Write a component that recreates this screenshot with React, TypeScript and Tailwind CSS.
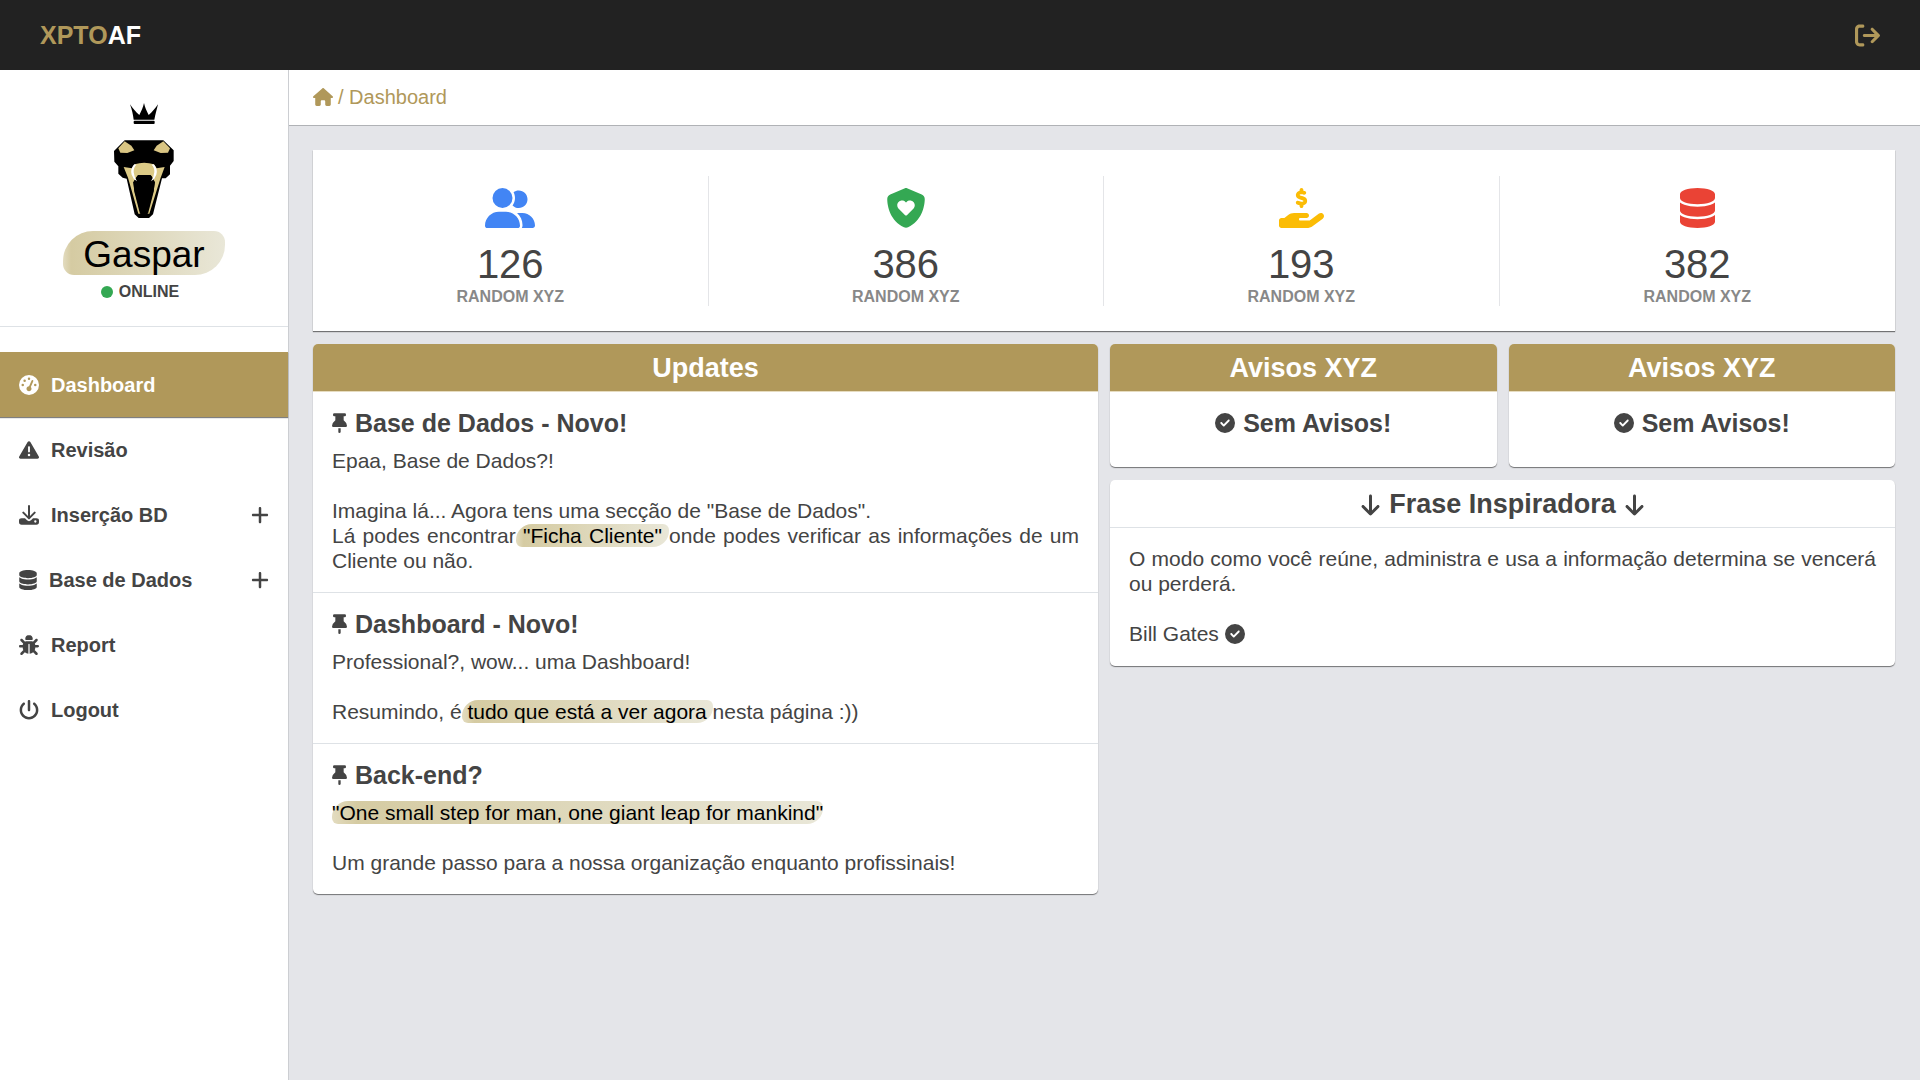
import type { ReactNode } from "react";
import type { IconType } from "react-icons";
import {
  FaArrowDown,
  FaArrowRightFromBracket,
  FaBug,
  FaCircleCheck,
  FaDatabase,
  FaGaugeHigh,
  FaHandHoldingDollar,
  FaHouse,
  FaPlus,
  FaPowerOff,
  FaShieldHeart,
  FaTriangleExclamation,
  FaUserGroup,
} from "react-icons/fa6";

function Crown() {
  return (
    <svg viewBox="0 0 84 63" className="h-[21px] w-7" aria-hidden="true">
      <path
        d="M0 4C8 16 18 28 28 36C34 24 39 14 42 0C45 14 50 24 56 36C66 28 76 16 84 4C80 20 76 34 73 50H11C9 34 6 20 0 4Z"
        fill="#000"
      />
      <rect x="11" y="53" width="63" height="10" rx="3" fill="#000" />
    </svg>
  );
}

function Snake() {
  return (
    <svg viewBox="190 149 180 234" className="h-[78px] w-[60px]" role="img" aria-label="XPTOAF">
      <path
        d="M190 182L222 150H338L369 180V212L358 226V252L345 264H334L307 372L295 383H264L252 372L228 265L216 262L203 250V228L191 214Z"
        fill="#000"
      />
      <path d="M222 153L203 174L209 187L230 188L251 180L242 166Z" fill="#d9c583" />
      <path d="M338 153L358 174L352 187L330 188L309 180L318 166Z" fill="#d9c583" />
      <path
        d="M219 230L244 234L252 222Q280 212 310 222L318 234L342 230L330 262L296 370H289L309 300L313 276L302 256H260L248 276L251 300L270 370H263L232 262Z"
        fill="#dcca86"
      />
      <path d="M262 254H300L312 276L309 304L292 370H268L251 304L248 276Z" fill="#000" />
      <path d="M251 222Q238 234 243 253Q247 266 259 273Q250 258 249 246Q248 232 257 223Z" fill="#fff" />
      <path d="M309 222Q322 234 317 253Q313 266 301 273Q310 258 311 246Q312 232 303 223Z" fill="#fff" />
    </svg>
  );
}

function InsertIcon({ className }: { className?: string }) {
  return (
    <svg viewBox="0 0 60 60" className={className} aria-hidden="true">
      <path
        d="M30 3V38M13 23L30 40L47 23"
        fill="none"
        stroke="currentColor"
        strokeWidth="6"
        strokeLinecap="round"
        strokeLinejoin="round"
      />
      <path
        fillRule="evenodd"
        fill="currentColor"
        d="M8 40H18L24 46Q30 51 36 46L42 40H52Q60 40 60 47V51Q60 59 52 59H8Q0 59 0 51V47Q0 40 8 40ZM49 46A3.500 3.500 0 1 0 49 53A3.500 3.500 0 1 0 49 46Z"
      />
    </svg>
  );
}

function PinIcon() {
  return (
    <svg viewBox="0 0 45 60" className="h-5 w-[15px]" fill="currentColor" aria-hidden="true">
      <path d="M7 1H38Q42 1 42 5V6Q42 10 38 10H35V22Q43 28 45 38Q45 42 41 42H4Q0 42 0 38Q2 28 10 22V10H7Q3 10 3 6V5Q3 1 7 1Z" />
      <path d="M19 46H26V56Q26 60 22 60Q19 60 19 56Z" />
    </svg>
  );
}

function Mark({ children }: { children: ReactNode }) {
  return (
    <mark className="rounded-tl-2xl rounded-tr-md rounded-br-2xl rounded-bl-md bg-transparent bg-linear-to-r from-[#e3dcc0] via-[#d5cba2] via-5% to-[#e9e7d8] text-black">
      {children}
    </mark>
  );
}

type NavItem = {
  label: string;
  icon: IconType | typeof InsertIcon;
  active?: boolean;
  expandable?: boolean;
  narrow?: boolean;
};

const nav: NavItem[] = [
  { label: "Dashboard", icon: FaGaugeHigh, active: true },
  { label: "Revisão", icon: FaTriangleExclamation },
  { label: "Inserção BD", icon: InsertIcon, expandable: true },
  { label: "Base de Dados", icon: FaDatabase, expandable: true, narrow: true },
  { label: "Report", icon: FaBug },
  { label: "Logout", icon: FaPowerOff },
];

const stats = [
  { value: 126, icon: FaUserGroup, style: "w-[50px] text-[#4285f4]" },
  { value: 386, icon: FaShieldHeart, style: "w-10 text-[#34a853]" },
  { value: 193, icon: FaHandHoldingDollar, style: "w-[45px] text-[#fbbc05]" },
  { value: 382, icon: FaDatabase, style: "w-[35px] text-[#ea4335]" },
];

const cardShadow = "shadow-[0_1px_1px_rgba(0,0,0,0.5)]";

function NavLink({ item }: { item: NavItem }) {
  const Icon = item.icon;
  const inner = (
    <>
      <Icon className={item.narrow ? "h-5 w-[18px]" : "h-5 w-5"} />
      <span className="flex-1 text-left">{item.label}</span>
      {item.expandable && <FaPlus className="h-5 w-[18px]" />}
    </>
  );
  const base = "flex h-[65px] w-full items-center gap-3 px-[19px] text-xl font-bold";
  return (
    <li>
      {item.expandable ? (
        <button type="button" aria-expanded="false" className={base}>
          {inner}
        </button>
      ) : (
        <a
          href="#"
          className={item.active ? `${base} bg-[#b0985a] text-white ${cardShadow}` : base}
        >
          {inner}
        </a>
      )}
    </li>
  );
}

function Card({ children }: { children: ReactNode }) {
  return <section className={`overflow-hidden rounded-[5px] bg-white ${cardShadow}`}>{children}</section>;
}

function GoldTitle({ children }: { children: ReactNode }) {
  return (
    <h2 className="flex h-12 items-center justify-center border-b border-[#e6dcc0] bg-[#b0985a] pt-0.5 text-[27px] font-bold text-white">
      {children}
    </h2>
  );
}

function Update({ title, children }: { title: string; children: ReactNode }) {
  return (
    <article className="border-b border-[#dee2e6] px-[19px] pt-[17px] pb-[19px] last:border-b-0">
      <h3 className="flex items-center gap-2 text-[25px] leading-7 font-bold">
        <PinIcon />
        {title}
      </h3>
      <p className="mt-[11px] text-justify text-[21px] leading-[25px]">{children}</p>
    </article>
  );
}

function Notice() {
  return (
    <Card>
      <GoldTitle>Avisos XYZ</GoldTitle>
      <p className="flex items-center justify-center gap-2 pt-[17px] pb-[30px] text-[25px] leading-7 font-bold">
        <FaCircleCheck className="h-5 w-5" />
        Sem Avisos!
      </p>
    </Card>
  );
}

export default function App() {
  return (
    <div className="flex min-h-screen flex-col bg-[#e4e5e9] font-['Liberation_Sans',Arial,sans-serif] text-xl text-[#444]">
      <header className="flex h-[70px] items-center justify-between bg-[#222] px-10">
        <a href="#" className="text-[25px] font-bold text-white">
          <span className="text-[#b0985a]">XPTO</span>AF
        </a>
        <button type="button" aria-label="Sair" className="text-[#b0985a]">
          <FaArrowRightFromBracket className="h-[25px] w-[25px]" />
        </button>
      </header>

      <div className="flex flex-1">
        <aside className="w-[289px] shrink-0 border-r border-[#ccced2] bg-white">
          <div className="flex flex-col items-center border-b border-[#dee2e6] pt-[33px] pb-6">
            <Crown />
            <div className="mt-4">
              <Snake />
            </div>
            <div className="mt-[13px] flex h-11 items-center rounded-tl-[30px] rounded-tr-[11px] rounded-br-[30px] rounded-bl-[11px] bg-linear-to-r from-[#e3dcc0] via-[#d5cba2] via-5% to-[#e9e7d8] px-5 pt-0.5 text-[37px] leading-none text-black">
              Gaspar
            </div>
            <div className="mt-[7px] flex items-center gap-[6px] pr-2 text-base leading-5 font-bold">
              <span className="h-3 w-3 rounded-full bg-[#34a853]" />
              ONLINE
            </div>
          </div>
          <nav className="mt-[25px]">
            <ul>
              {nav.map((item) => (
                <NavLink key={item.label} item={item} />
              ))}
            </ul>
          </nav>
        </aside>

        <div className="min-w-0 flex-1">
          <nav
            aria-label="Breadcrumb"
            className="flex h-14 items-center gap-[5px] border-b border-[#b0b2b6] bg-white px-6 pb-0.5 text-[#b0985a]"
          >
            <a href="#" aria-label="Início">
              <FaHouse className="h-[18px] w-5" />
            </a>
            <span>/ Dashboard</span>
          </nav>

          <main className="py-6 pr-[25px] pl-6">
            <section className={`grid grid-cols-4 bg-white pt-[26px] pb-[25px] ${cardShadow}`}>
              {stats.map(({ value, icon: Icon, style }) => (
                <div
                  key={value}
                  className="flex flex-col items-center border-r border-[#e4e5e8] pt-3 pb-px last:border-r-0"
                >
                  <Icon className={`h-10 ${style}`} />
                  <span className="mt-3 text-[40px] leading-[48px]">{value}</span>
                  <span className="mt-px text-base leading-4 font-bold text-[#888]">RANDOM XYZ</span>
                </div>
              ))}
            </section>

            <div className="mt-[13px] grid grid-cols-2 items-start gap-3">
              <Card>
                <GoldTitle>Updates</GoldTitle>
                <Update title="Base de Dados - Novo!">
                  Epaa, Base de Dados?!
                  <br />
                  <br />
                  Imagina lá... Agora tens uma secção de "Base de Dados".
                  <br />
                  Lá podes encontrar<Mark> "Ficha Cliente" </Mark>onde podes verificar as informações de um
                  Cliente ou não.
                </Update>
                <Update title="Dashboard - Novo!">
                  Professional?, wow... uma Dashboard!
                  <br />
                  <br />
                  Resumindo, é<Mark> tudo que está a ver agora </Mark>nesta página :))
                </Update>
                <Update title="Back-end?">
                  <Mark>"One small step for man, one giant leap for mankind"</Mark>
                  <br />
                  <br />
                  Um grande passo para a nossa organização enquanto profissinais!
                </Update>
              </Card>

              <div className="grid grid-cols-2 gap-x-3 gap-y-[13px]">
                <Notice />
                <Notice />
                <div className="col-span-2">
                  <Card>
                    <h2 className="flex h-12 items-center justify-center gap-2 border-b border-[#dee2e6] pt-0.5 text-[27px] font-bold">
                      <FaArrowDown className="h-6 w-[21px]" />
                      Frase Inspiradora
                      <FaArrowDown className="h-6 w-[21px]" />
                    </h2>
                    <div className="px-[19px] pt-[18px] pb-5 text-[21px] leading-[25px]">
                      <p className="text-justify">
                        O modo como você reúne, administra e usa a informação determina se vencerá ou
                        perderá.
                      </p>
                      <p className="mt-[25px] flex items-center gap-[6px]">
                        Bill Gates
                        <FaCircleCheck className="h-5 w-5" />
                      </p>
                    </div>
                  </Card>
                </div>
              </div>
            </div>
          </main>
        </div>
      </div>
    </div>
  );
}
